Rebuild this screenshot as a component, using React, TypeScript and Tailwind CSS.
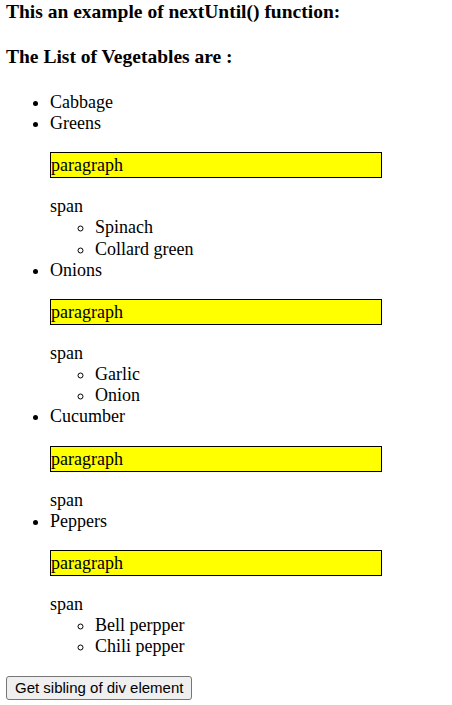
const serif = { fontFamily: '"Liberation Serif", "Times New Roman", serif' };

function Para() {
  return (
    <p className="my-[18px] w-[332px] border border-black bg-[#ffff00] leading-[24px]">
      paragraph
    </p>
  );
}

function Sub({ items }: { items: string[] }) {
  return (
    <ul className="list-[circle] pl-[45px]">
      {items.map((it) => (
        <li key={it}>{it}</li>
      ))}
    </ul>
  );
}

export default function App() {
  return (
    <div className="bg-white px-[6px] text-[18px] leading-[21.15px] text-black" style={serif}>
      <h3 className="text-[19.5px] font-bold leading-[23px]">This an example of nextUntil() function:</h3>
      <h3 className="mt-[22px] text-[19.5px] font-bold leading-[23px]">The List of Vegetables are :</h3>
      <div className="mt-[24px]">
        <ul className="list-disc pl-[44px]">
          <li>Cabbage</li>
          <li>
            Greens
            <Para />
            <span>span</span>
            <Sub items={["Spinach", "Collard green"]} />
          </li>
          <li>
            Onions
            <Para />
            <span>span</span>
            <Sub items={["Garlic", "Onion"]} />
          </li>
          <li>
            Cucumber
            <Para />
            <span>span</span>
          </li>
          <li>
            Peppers
            <Para />
            <span>span</span>
            <Sub items={["Bell perpper", "Chili pepper"]} />
          </li>
        </ul>
      </div>
      <button
        className="mt-[19px] mb-[6px] rounded-[3px] border border-[#767676] bg-[#efefef] px-[8px] text-[15px] leading-[22px] text-black"
        style={{ fontFamily: '"Liberation Sans", Arial, sans-serif' }}
      >
        Get sibling of div element
      </button>
    </div>
  );
}
